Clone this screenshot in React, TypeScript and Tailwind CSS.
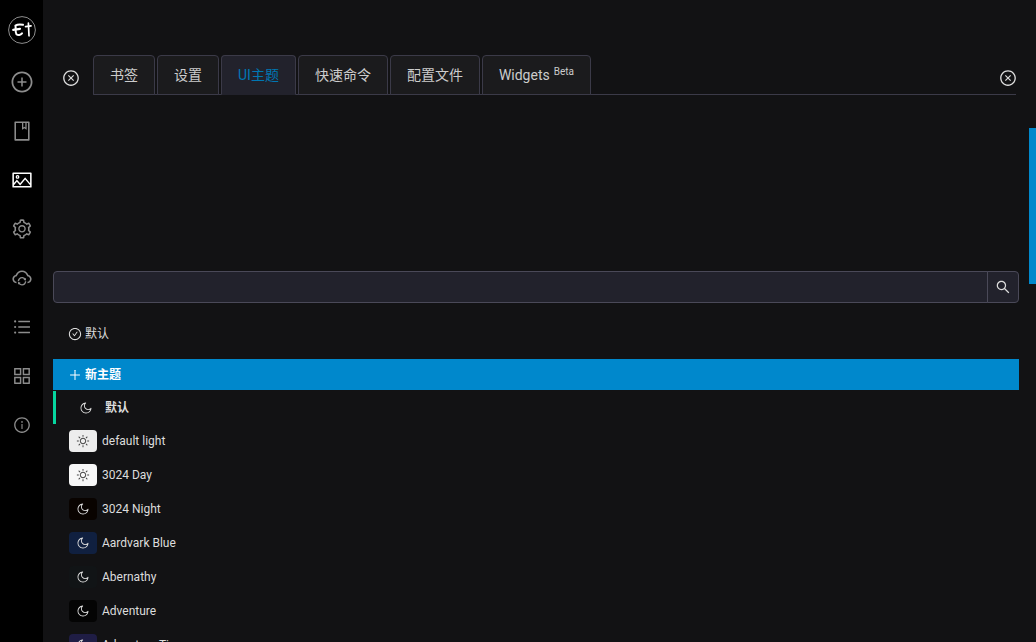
import { useState } from 'react';
import type { IconType } from 'react-icons';
import {
  AiOutlineAppstore,
  AiOutlineBook,
  AiOutlineCheckCircle,
  AiOutlineCloseCircle,
  AiOutlineCloudSync,
  AiOutlineInfoCircle,
  AiOutlineMoon,
  AiOutlinePicture,
  AiOutlinePlus,
  AiOutlinePlusCircle,
  AiOutlineSearch,
  AiOutlineSetting,
  AiOutlineSun,
  AiOutlineUnorderedList,
} from 'react-icons/ai';

interface NavItem {
  label: string;
  icon: IconType;
  size: number;
}

interface Theme {
  name: string;
  swatch: string;
  light?: boolean;
}

const navItems: NavItem[] = [
  { label: '新建', icon: AiOutlinePlusCircle, size: 24 },
  { label: '书签', icon: AiOutlineBook, size: 22 },
  { label: 'UI主题', icon: AiOutlinePicture, size: 22 },
  { label: '设置', icon: AiOutlineSetting, size: 22 },
  { label: '同步', icon: AiOutlineCloudSync, size: 22 },
  { label: '批量操作', icon: AiOutlineUnorderedList, size: 20 },
  { label: 'Widgets', icon: AiOutlineAppstore, size: 22 },
  { label: '关于', icon: AiOutlineInfoCircle, size: 18 },
];

const tabs = ['书签', '设置', 'UI主题', '快速命令', '配置文件', 'Widgets'];

const themes: Theme[] = [
  { name: 'default light', swatch: 'bg-[#ededed] text-[#444444]', light: true },
  { name: '3024 Day', swatch: 'bg-[#f7f7f7] text-[#444444]', light: true },
  { name: '3024 Night', swatch: 'bg-[#090300] text-[#dddddd]' },
  { name: 'Aardvark Blue', swatch: 'bg-[#102040] text-[#dddddd]' },
  { name: 'Abernathy', swatch: 'bg-[#111416] text-[#dddddd]' },
  { name: 'Adventure', swatch: 'bg-[#040404] text-[#dddddd]' },
  { name: 'Adventure Time', swatch: 'bg-[#1f1d45] text-[#dddddd]' },
];

function Logo() {
  return (
    <svg viewBox="0 0 28 28" className="size-7" fill="none" aria-hidden="true">
      <circle cx="14" cy="14" r="13.4" stroke="#8c8c8c" />
      <g stroke="#ffffff" strokeLinecap="round" strokeLinejoin="round">
        <path d="M15 8.8C12.5 8.4 9 8.6 7.4 9.6C8.2 11.6 6.8 14.6 8.4 18.2C10 19.6 12.6 19.2 14 17.4" strokeWidth="2" />
        <path d="M5.2 13.8C7.6 13.4 9.8 13.2 12 12.8" strokeWidth="2.2" />
        <path d="M17.6 10.6L23 9.8" strokeWidth="1.8" />
        <path d="M20.4 7.2L21 19.8" strokeWidth="1.7" />
      </g>
    </svg>
  );
}

function Sidebar() {
  return (
    <nav className="flex w-[43px] shrink-0 flex-col items-center bg-black pt-4 text-[#8c8c8c]">
      <button type="button" aria-label="electerm" className="mb-[13px]">
        <Logo />
      </button>
      {navItems.map(({ label, icon: Icon, size }) => (
        <button
          key={label}
          type="button"
          aria-label={label}
          className={`flex h-[49px] w-full items-center justify-center ${label === 'UI主题' ? 'text-white' : ''}`}
        >
          <Icon size={size} />
        </button>
      ))}
    </nav>
  );
}

function TabBar({ active, onChange }: { active: string; onChange: (tab: string) => void }) {
  return (
    <header className="flex items-end pt-[55px] pr-5 pl-[19px]">
      <button type="button" aria-label="关闭" className="mr-[13px] mb-2">
        <AiOutlineCloseCircle size={18} className="text-[#dddddd]" />
      </button>
      <div role="tablist" className="flex h-10 flex-1 gap-0.5 border-b border-[#3b3a48] text-sm">
        {tabs.map((tab) => (
          <button
            key={tab}
            type="button"
            role="tab"
            aria-selected={tab === active}
            onClick={() => onChange(tab)}
            className={`-mb-px rounded-t-sm border px-4 whitespace-nowrap ${
              tab === active
                ? 'border-[#3b3a48] border-b-[#22222c] bg-[#22222c] text-[#0077b3]'
                : 'border-[#3b3a48] bg-[#1b1b1d] text-[#cccccc]'
            }`}
          >
            {tab}
            {tab === 'Widgets' && <sup className="ml-1 text-[10px]">Beta</sup>}
          </button>
        ))}
        <button type="button" aria-label="关闭面板" className="-mr-px mb-[7px] ml-auto self-end">
          <AiOutlineCloseCircle size={18} className="text-[#dddddd]" />
        </button>
      </div>
    </header>
  );
}

function ThemeList() {
  return (
    <ul>
      <li className="flex h-[31px] items-center gap-[3px] bg-[#0088cc] pl-[15px] font-bold text-white">
        <AiOutlinePlus size={14} />
        新主题
      </li>
      <li className="mt-px flex h-[33px] items-center gap-3 border-l-[3px] border-[#06d6a0] pl-[23px] font-bold">
        <AiOutlineMoon size={14} />
        默认
      </li>
      {themes.map(({ name, swatch, light }) => (
        <li key={name} className="flex h-[34px] items-center gap-[5px] pl-4">
          <span className={`flex h-[22px] w-7 items-center justify-center rounded-sm ${swatch}`}>
            {light ? <AiOutlineSun size={14} /> : <AiOutlineMoon size={14} />}
          </span>
          {name}
        </li>
      ))}
    </ul>
  );
}

export default function App() {
  const [active, setActive] = useState('UI主题');
  const [query, setQuery] = useState('');

  return (
    <div className="flex h-screen overflow-hidden bg-[#121214] font-['Roboto','Noto_Sans_CJK_SC',sans-serif] text-[#dddddd]">
      <Sidebar />
      <main className="relative min-w-0 flex-1">
        <TabBar active={active} onChange={setActive} />
        <section className="mt-44 pr-[17px] pl-2.5 text-xs">
          <form className="flex h-8" onSubmit={(e) => e.preventDefault()}>
            <input
              type="text"
              aria-label="搜索主题"
              value={query}
              onChange={(e) => setQuery(e.target.value)}
              className="min-w-0 flex-1 rounded-l-sm border border-[#4a4958] bg-[#22222c] px-3 outline-none"
            />
            <button
              type="submit"
              aria-label="搜索"
              className="-ml-px flex w-8 items-center justify-center rounded-r-sm border border-[#4a4958] bg-[#22222c]"
            >
              <AiOutlineSearch size={16} />
            </button>
          </form>
          <button type="button" className="mt-4 mb-[10px] flex h-[30px] items-center gap-[3px] pl-[15px]">
            <AiOutlineCheckCircle size={14} />
            默认
          </button>
          <ThemeList />
        </section>
        {/* scrollbar thumb */}
        <div className="absolute top-32 right-0 h-[156px] w-[7px] bg-[#0088cc]" />
      </main>
    </div>
  );
}
